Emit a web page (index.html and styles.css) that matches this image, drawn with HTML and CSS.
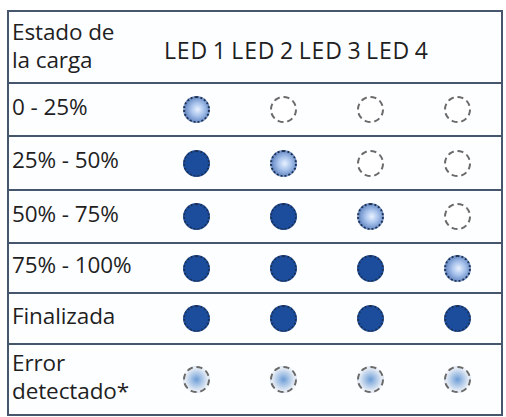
FILE: index.html
```html
<!DOCTYPE html>
<html lang="es">
<head>
  <meta charset="UTF-8">
  <meta name="viewport" content="width=device-width, initial-scale=1.0">
  <title>Estado de la carga</title>
  <link rel="stylesheet" href="styles.css">
</head>
<body>
  <!-- LED status table -->
  <div class="led-table">
    <div class="led-row led-head">
      <div class="led-label">Estado de<br>la carga</div>
      <div class="led-titles">LED 1 LED 2 LED 3 LED 4</div>
    </div>

    <div class="led-row r1">
      <div class="led-label">0 - 25%</div>
      <div class="led-cell"><span class="led blink"></span></div>
      <div class="led-cell"><span class="led off"></span></div>
      <div class="led-cell"><span class="led off"></span></div>
      <div class="led-cell"><span class="led off"></span></div>
    </div>

    <div class="led-row r2">
      <div class="led-label">25% - 50%</div>
      <div class="led-cell"><span class="led on"></span></div>
      <div class="led-cell"><span class="led blink"></span></div>
      <div class="led-cell"><span class="led off"></span></div>
      <div class="led-cell"><span class="led off"></span></div>
    </div>

    <div class="led-row r3">
      <div class="led-label">50% - 75%</div>
      <div class="led-cell"><span class="led on"></span></div>
      <div class="led-cell"><span class="led on"></span></div>
      <div class="led-cell"><span class="led blink"></span></div>
      <div class="led-cell"><span class="led off"></span></div>
    </div>

    <div class="led-row r4">
      <div class="led-label">75% - 100%</div>
      <div class="led-cell"><span class="led on"></span></div>
      <div class="led-cell"><span class="led on"></span></div>
      <div class="led-cell"><span class="led on"></span></div>
      <div class="led-cell"><span class="led blink"></span></div>
    </div>

    <div class="led-row r5">
      <div class="led-label">Finalizada</div>
      <div class="led-cell"><span class="led on"></span></div>
      <div class="led-cell"><span class="led on"></span></div>
      <div class="led-cell"><span class="led on"></span></div>
      <div class="led-cell"><span class="led on"></span></div>
    </div>

    <div class="led-row r6">
      <div class="led-label">Error<br>detectado*</div>
      <div class="led-cell"><span class="led error"></span></div>
      <div class="led-cell"><span class="led error"></span></div>
      <div class="led-cell"><span class="led error"></span></div>
      <div class="led-cell"><span class="led error"></span></div>
    </div>
  </div>
</body>
</html>
```

FILE: styles.css
```css
/* Page */
body {
  margin: 0;
  padding: 10px 0 0 7px;
  background: #ffffff;
  font-family: "Open Sans", "Noto Sans", sans-serif;
  color: #1f1f1f;
}

/* Table frame */
.led-table {
  width: 496px;
  border: 2px solid #45566d;
  box-sizing: border-box;
  background: #fdfeff;
}

.led-row {
  display: grid;
  grid-template-columns: 144px repeat(4, 87px);
  border-top: 2px solid #45566d;
}

.led-row:first-child {
  border-top: none;
}

.led-head { height: 70px; }
.r1 { height: 51px; }
.r2 { height: 52px; }
.r3 { height: 51px; }
.r4 { height: 48px; }
.r5 { height: 49px; }
.r6 { height: 69px; }

/* Left column text */
.led-label {
  display: flex;
  align-items: center;
  padding: 0 0 6px 3px;
  font-size: 22.5px;
  line-height: 28px;
  letter-spacing: -0.1px;
}

.led-head .led-label {
  padding-bottom: 2px;
}

.led-titles {
  grid-column: 2 / 6;
  display: flex;
  align-items: center;
  padding: 6px 0 0 11px;
  font-size: 23px;
  letter-spacing: 0.8px;
  word-spacing: -2px;
}

/* LED dots */
.led-cell {
  display: flex;
  align-items: center;
  justify-content: center;
}

.led {
  width: 27px;
  height: 27px;
  border-radius: 50%;
  box-sizing: border-box;
}

.led.off {
  background: #ffffff;
  border: 2px dashed #6a6a6a;
}

.led.on {
  background: #1b4d9c;
  border: 2px dotted #1a3058;
}

.led.blink {
  background: radial-gradient(circle at 55% 50%, #e9f2ff 0%, #a8c3ec 38%, #3c64ab 100%);
  border: 2px dotted #1f3252;
}

.led.error {
  background: radial-gradient(circle, #6c9dd6 0%, #b3cbe8 40%, #eef2f8 75%);
  border: 2px dashed #6a6a6a;
}
```
